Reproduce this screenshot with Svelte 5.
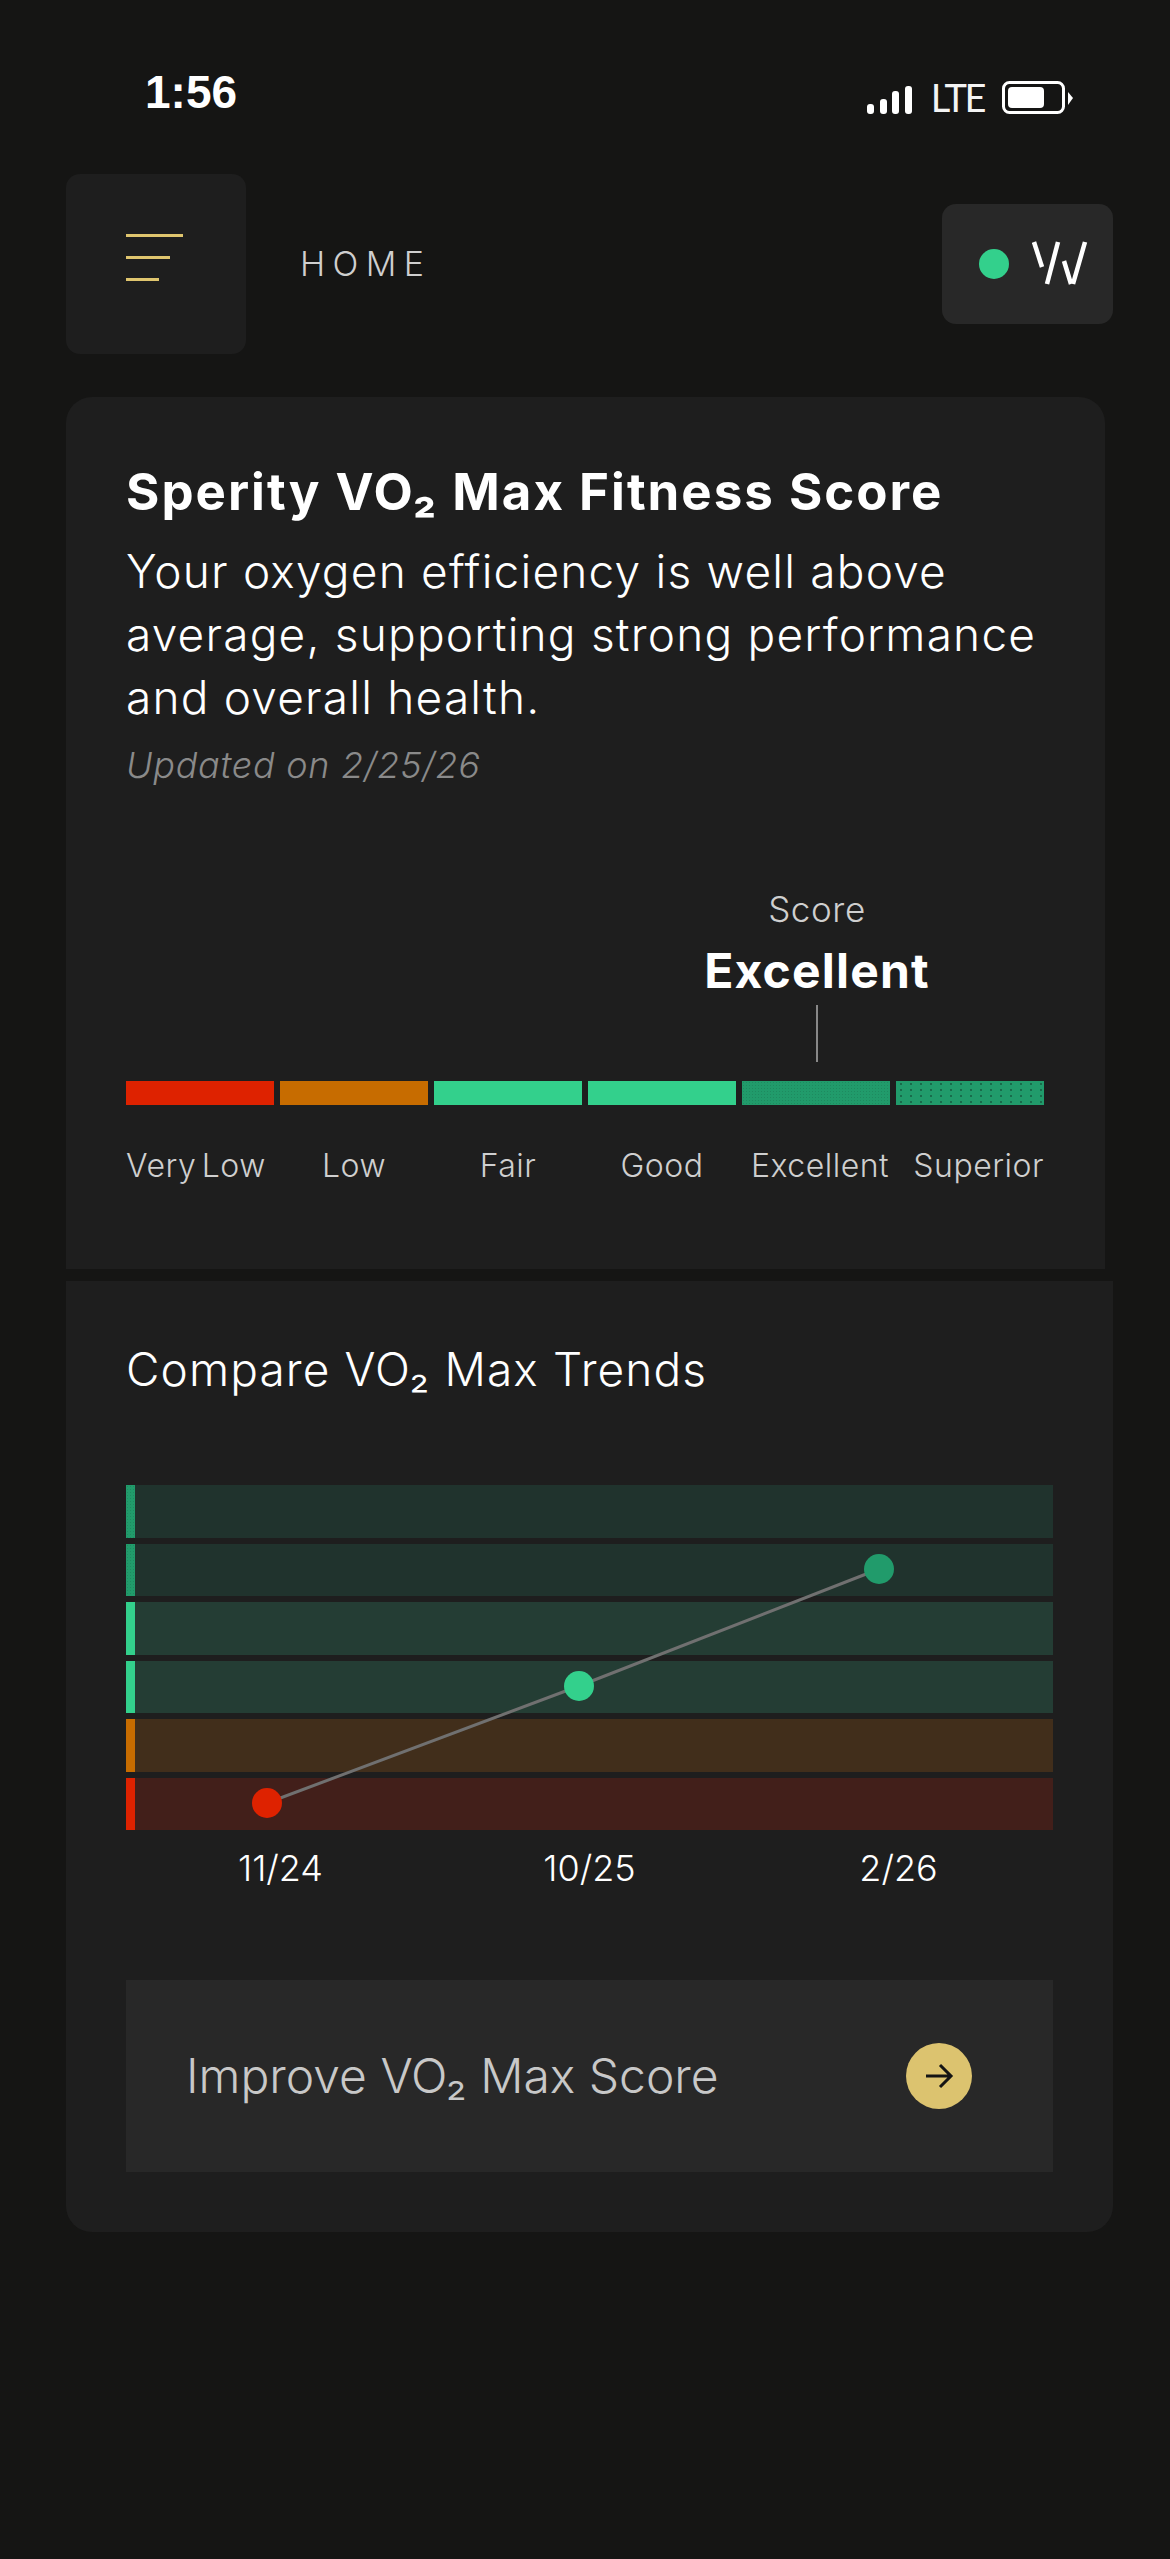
<script>
  const levels = [
    { name: 'Very Low', cls: 'red', align: 'start' },
    { name: 'Low', cls: 'orange', align: 'center' },
    { name: 'Fair', cls: 'green', align: 'center' },
    { name: 'Good', cls: 'green', align: 'center' },
    { name: 'Excellent', cls: 'deep', align: 'center shifted' },
    { name: 'Superior', cls: 'dots', align: 'end' }
  ];
  const rows = [
    { bg: 'r-deep', mark: 'deep' },
    { bg: 'r-deep', mark: 'deep' },
    { bg: 'r-green', mark: 'green' },
    { bg: 'r-green', mark: 'green' },
    { bg: 'r-orange', mark: 'orange' },
    { bg: 'r-red', mark: 'red' }
  ];
  const dates = ['11/24', '10/25', '2/26'];
</script>

<div class="page">
  <div class="status">
    <span class="time">1:56</span>
    <div class="status-right">
      <svg class="signal" width="45" height="28" viewBox="0 0 45 28" fill="#fff">
        <rect x="0" y="18" width="7" height="10" rx="3" />
        <rect x="13" y="13" width="7" height="15" rx="3" />
        <rect x="25" y="5" width="7" height="23" rx="3" />
        <rect x="38" y="0" width="7" height="28" rx="3" />
      </svg>
      <span class="lte">LTE</span>
      <svg class="battery" width="71" height="33" viewBox="0 0 71 33" fill="#fff">
        <rect x="1.5" y="1.5" width="60" height="30" rx="6" fill="none" stroke="#fff" stroke-width="3" />
        <rect x="6" y="6" width="36" height="21" rx="4" />
        <path d="M66 11 L71 17 L66 24 Z" />
      </svg>
    </div>
  </div>

  <header class="top">
    <div class="menu">
      <span class="l1"></span>
      <span class="l2"></span>
      <span class="l3"></span>
    </div>
    <span class="home">HOME</span>
    <div class="pill">
      <span class="dot"></span>
      <svg class="logo" width="56" height="44" viewBox="0 0 56 44" fill="none" stroke="#fff" stroke-width="4.5">
        <path d="M2 1 L10 26" />
        <path d="M26 1 L15 43" />
        <path d="M32 20 L39 43 M53 1 L41 43" />
      </svg>
    </div>
  </header>

  <section class="card score-card">
    <h1>Sperity VO₂ Max Fitness Score</h1>
    <p class="desc">Your oxygen efficiency is well above average, supporting strong performance and overall health.</p>
    <p class="updated">Updated on 2/25/26</p>

    <div class="score-head">
      <span class="score-label">Score</span>
      <span class="score-value">Excellent</span>
      <span class="tick"></span>
    </div>

    <div class="scale">
      {#each levels as lv}
        <div class="seg {lv.cls}"></div>
      {/each}
    </div>
    <div class="scale labels">
      {#each levels as lv}
        <span class="lab {lv.align}">{lv.name}</span>
      {/each}
    </div>
  </section>

  <section class="card trend-card">
    <h2>Compare VO₂ Max Trends</h2>

    <div class="chart">
      {#each rows as r}
        <div class="row {r.bg}"><span class="mark {r.mark}"></span></div>
      {/each}
      <svg class="plot" width="927" height="345" viewBox="0 0 927 345">
        <path d="M141 318 L453 201 L753 84" fill="none" stroke="#707070" stroke-width="3" />
        <circle cx="141" cy="318" r="15" fill="#de2200" />
        <circle cx="453" cy="201" r="15" fill="#33d08c" />
        <circle cx="753" cy="84" r="15" fill="#219b6b" />
      </svg>
    </div>

    <div class="dates">
      {#each dates as d}
        <span>{d}</span>
      {/each}
    </div>

    <div class="improve">
      <span>Improve VO₂ Max Score</span>
      <span class="go">
        <svg width="30" height="26" viewBox="0 0 30 26" fill="none" stroke="#141414" stroke-width="3">
          <path d="M2 13 H27 M16 2 L27 13 L16 24" />
        </svg>
      </span>
    </div>
  </section>
</div>

<style>
  :global(body) {
    margin: 0;
    background: #151514;
  }
  .page {
    width: 1170px;
    height: 2559px;
    background: #151514;
    font-family: "Inter", "Liberation Sans", sans-serif;
    color: #fff;
    overflow: hidden;
  }
  .status {
    height: 174px;
    box-sizing: border-box;
    padding: 69px 97px 0 145px;
    display: flex;
    justify-content: space-between;
    align-items: flex-start;
  }
  .time {
    font: 700 46px/46px "Liberation Sans", sans-serif;
  }
  .status-right {
    display: flex;
    align-items: center;
    margin-top: 12px;
  }
  .lte {
    font: 400 38px/33px "Lato", sans-serif;
    letter-spacing: -2.4px;
    margin: 0 18px 0 19px;
    color: #f4f4f4;
  }
  .signal {
    margin-top: 4px;
  }
  .top {
    display: flex;
    align-items: center;
    height: 180px;
    padding: 0 57px 0 66px;
  }
  .menu {
    width: 180px;
    height: 180px;
    box-sizing: border-box;
    padding: 60px;
    background: #1e1e1e;
    border-radius: 14px;
    display: flex;
    flex-direction: column;
    gap: 19.5px;
  }
  .menu span {
    display: block;
    height: 2.5px;
    background: #dfc56e;
  }
  .l1 { width: 57px; }
  .l2 { width: 44px; }
  .l3 { width: 33px; }
  .home {
    margin: 0 0 2px 54px;
    font-size: 34px;
    font-weight: 300;
    letter-spacing: 7.4px;
    color: #cfcfcf;
    flex: 1;
  }
  .pill {
    width: 171px;
    height: 120px;
    background: #282828;
    border-radius: 14px;
    display: flex;
    align-items: center;
    box-sizing: border-box;
    padding-left: 37px;
    gap: 23px;
  }
  .dot {
    width: 30px;
    height: 30px;
    border-radius: 50%;
    background: #33d08c;
  }
  .logo {
    display: block;
    margin-top: -2px;
  }
  .card {
    background: #1e1e1e;
    margin-left: 66px;
    box-sizing: border-box;
    padding-left: 60px;
  }
  .score-card {
    width: 1039px;
    height: 872px;
    margin-top: 43px;
    border-radius: 26px 26px 0 0;
    padding-top: 62px;
  }
  h1 {
    margin: 0;
    font-size: 51px;
    line-height: 66px;
    font-weight: 700;
    letter-spacing: 2px;
  }
  .desc {
    margin: 15px 0 0;
    width: 940px;
    font-size: 46px;
    line-height: 63px;
    font-weight: 300;
    letter-spacing: 1.2px;
  }
  .updated {
    margin: 15px 0 0;
    font-size: 36px;
    line-height: 42px;
    font-style: italic;
    font-weight: 300;
    letter-spacing: 0.75px;
    color: #8a8a8a;
  }
  .score-head {
    margin-top: 102px;
    width: 918px;
    height: 158px;
    position: relative;
  }
  .score-label, .score-value, .tick {
    position: absolute;
    left: 691px;
    transform: translateX(-50%);
    white-space: nowrap;
  }
  .score-label {
    top: 0;
    font-size: 35px;
    line-height: 42px;
    font-weight: 300;
    letter-spacing: 0.6px;
    color: #cfcfcf;
  }
  .score-value {
    top: 55px;
    font-size: 48px;
    line-height: 56px;
    font-weight: 700;
    letter-spacing: 1.2px;
  }
  .tick {
    top: 117px;
    width: 2px;
    height: 57px;
    background: #888;
  }
  .scale {
    display: grid;
    grid-template-columns: repeat(6, 148px);
    gap: 6px;
    width: 918px;
  }
  .seg {
    height: 24px;
    margin-top: 35px;
  }
  .red { background: #de2200; }
  .orange { background: #c76c00; }
  .green { background: #33d08c; }
  .deep {
    background: #219b6b;
    background-image: radial-gradient(circle, rgba(20, 60, 40, 0.18) 0.6px, transparent 0.8px);
    background-size: 3px 3px;
  }
  .dots {
    background: #219b6b;
    background-image: radial-gradient(circle, rgba(15, 50, 35, 0.45) 0.8px, transparent 1px);
    background-size: 10px 6px;
  }
  .labels {
    margin-top: 41px;
  }
  .lab {
    font-size: 32px;
    line-height: 40px;
    font-weight: 300;
    letter-spacing: 0.5px;
    word-spacing: -4px;
    color: #cfcfcf;
    white-space: nowrap;
  }
  .lab.start { text-align: left; }
  .lab.center { text-align: center; }
  .lab.shifted { padding-left: 8px; }
  .lab.end { text-align: right; }
  .trend-card {
    width: 1047px;
    height: 951px;
    margin-top: 12px;
    border-radius: 0 0 26px 26px;
    padding-top: 58px;
  }
  h2 {
    margin: 0;
    font-size: 46px;
    line-height: 60px;
    font-weight: 300;
    letter-spacing: 1.1px;
  }
  .chart {
    position: relative;
    width: 927px;
    margin-top: 86px;
    display: flex;
    flex-direction: column;
    gap: 6px;
  }
  .row {
    height: 52.5px;
    display: flex;
  }
  .mark { width: 9px; }
  .r-deep { background: #20332d; }
  .r-green { background: #243d34; }
  .r-orange { background: #412e1b; }
  .r-red { background: #421f1a; }
  .plot {
    position: absolute;
    left: 0;
    top: 0;
  }
  .dates {
    width: 927px;
    display: grid;
    grid-template-columns: repeat(3, 309px);
    margin-top: 18px;
    font-size: 36px;
    line-height: 40px;
    font-weight: 300;
    text-align: center;
  }
  .improve {
    width: 927px;
    height: 192px;
    margin-top: 92px;
    background: #282828;
    display: flex;
    align-items: center;
    justify-content: space-between;
    box-sizing: border-box;
    padding: 0 81px 2px 60px;
    font-size: 48px;
    font-weight: 300;
    color: #c8c8c8;
  }
  .go {
    width: 66px;
    height: 66px;
    border-radius: 50%;
    background: #dcc36f;
    display: flex;
    align-items: center;
    justify-content: center;
    margin-top: 2px;
  }
</style>
